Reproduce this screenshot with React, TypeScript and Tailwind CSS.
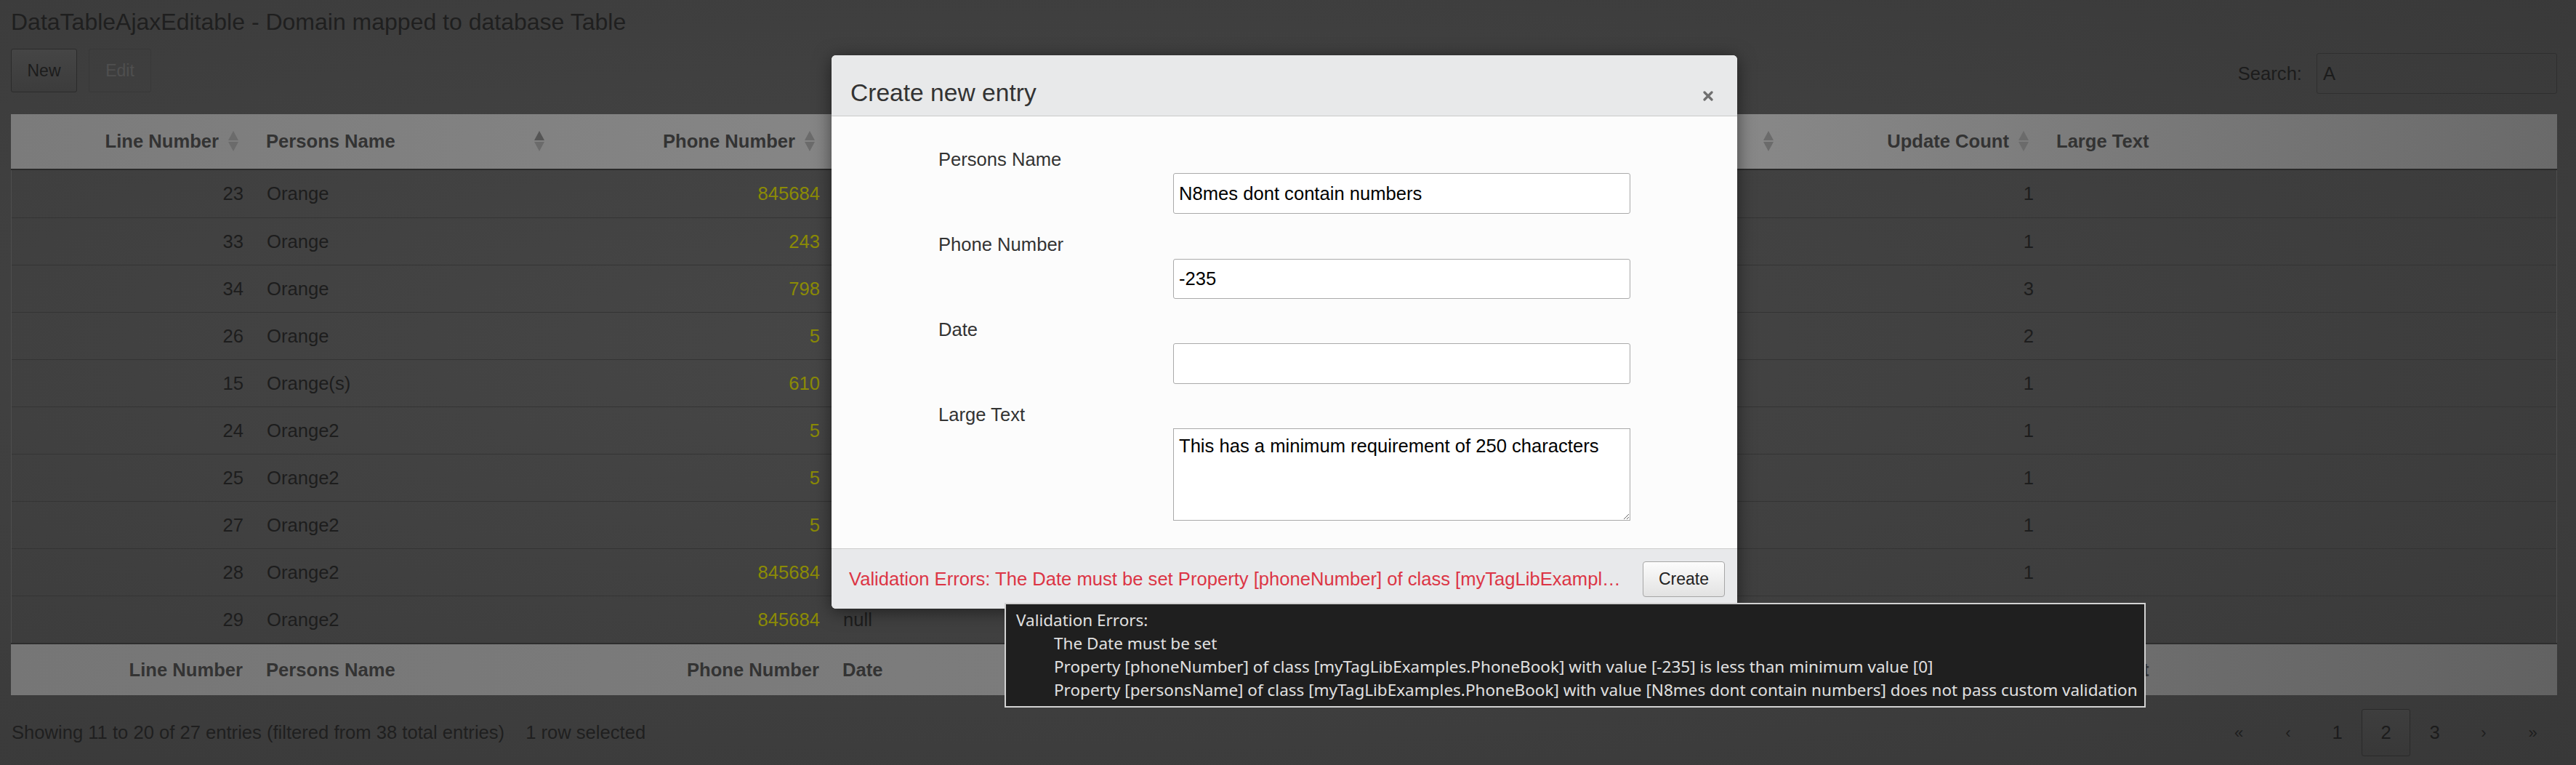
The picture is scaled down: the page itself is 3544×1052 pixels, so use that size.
import React from "react";

type Row = [string, string, string, string, string];

const rows: Row[] = [
  ["23", "Orange", "845684", "", "1"],
  ["33", "Orange", "243", "", "1"],
  ["34", "Orange", "798", "", "3"],
  ["26", "Orange", "5", "", "2"],
  ["15", "Orange(s)", "610", "", "1"],
  ["24", "Orange2", "5", "", "1"],
  ["25", "Orange2", "5", "", "1"],
  ["27", "Orange2", "5", "", "1"],
  ["28", "Orange2", "845684", "", "1"],
  ["29", "Orange2", "845684", "null", "1"],
];

function SortIcon({ active }: { active?: boolean }) {
  return (
    <svg width="14" height="28" viewBox="0 0 14 28" className="shrink-0">
      <polygon points="7,0 14,13 0,13" fill={active ? "#555555" : "#6b6b6b"} />
      <polygon points="0,15 14,15 7,28" fill="#6b6b6b" />
    </svg>
  );
}

const cols = "grid grid-cols-[335px_421px_372px_1319px_351px_705px]";

function HeadRight({ label }: { label: string }) {
  return (
    <div className="flex items-center justify-end gap-[13px] pr-[22px]">
      <span>{label}</span>
      <SortIcon />
    </div>
  );
}

function HeadLeft({ label, active }: { label: string; active?: boolean }) {
  return (
    <div className="flex items-center justify-between pl-[16px] pr-[22px]">
      <span>{label}</span>
      <SortIcon active={active} />
    </div>
  );
}

export default function App() {
  return (
    <div className="relative w-[3544px] h-[1052px] overflow-hidden bg-[radial-gradient(ellipse_at_40%_45%,#474747_0%,#3f3f3f_55%,#383838_100%)] font-['Liberation_Sans',Arial,sans-serif] text-[#1d1d1d]">
      {/* Page */}
      <div className="pl-[15px] pr-[26px]">
        <div className="pt-[13px] text-[32px] leading-[34px] text-[#1f1f1f]">
          DataTableAjaxEditable - Domain mapped to database Table
        </div>

        <div className="mt-[20px] flex items-start justify-between">
          <div className="flex gap-[16px]">
            <div className="h-[60px] w-[91px] flex items-center justify-center rounded-[3px] border border-[#2b2b2b] bg-[linear-gradient(#454545,#3c3c3c)] text-[23px] text-[#1c1c1c]">
              New
            </div>
            <div className="h-[60px] w-[86px] flex items-center justify-center rounded-[3px] border border-[#383838] text-[23px] text-[#4f4f4f]">
              Edit
            </div>
          </div>
          <div className="mt-[6px] flex items-center gap-[20px] text-[25.6px] text-[#1c1c1c]">
            <span>Search:</span>
            <div className="h-[56px] w-[331px] rounded-[3px] border border-[#2f2f2f] flex items-center pl-[8px]">
              A
            </div>
          </div>
        </div>

        {/* Table */}
        <div className="mt-[28px] w-[3503px]">
          <div
            className={`${cols} h-[77px] items-center border-b-2 border-[#2a2a2a] bg-[linear-gradient(to_right,#7b7b7b_0%,#858585_30%,#888888_68%,#6a6a6a_100%)] text-[25.6px] font-bold text-[#333333]`}
          >
            <HeadRight label="Line Number" />
            <HeadLeft label="Persons Name" active />
            <HeadRight label="Phone Number" />
            <HeadLeft label="Date" />
            <HeadRight label="Update Count" />
            <HeadLeft label="Large Text" />
          </div>
          <div className="border-x border-[#4e4e4e]">
            {rows.map((r, i) => (
              <div
                key={i}
                className={`${cols} h-[65px] items-center text-[25.6px] ${i > 0 ? "border-t border-[#343434]" : ""}`}
              >
                <div className="text-right pr-[16px]">{r[0]}</div>
                <div className="pl-[16px]">{r[1]}</div>
                <div className="text-right pr-[16px] text-[#8b8b05]">{r[2]}</div>
                <div className="pl-[16px]">{r[3]}</div>
                <div className="text-right pr-[16px]">{r[4]}</div>
                <div className="pl-[16px]"></div>
              </div>
            ))}
          </div>
          <div
            className={`${cols} h-[72px] items-center border-t-2 border-[#2e2e2e] bg-[linear-gradient(to_right,#767676_0%,#7c7c7c_35%,#7a7a7a_65%,#626262_100%)] text-[25.6px] font-bold text-[#333333]`}
          >
            <div className="text-right pr-[16px]">Line Number</div>
            <div className="pl-[16px]">Persons Name</div>
            <div className="text-right pr-[16px]">Phone Number</div>
            <div className="pl-[16px]">Date</div>
            <div className="text-right pr-[16px]">Update Count</div>
            <div className="pl-[16px]">Large Text</div>
          </div>

          <div className="mt-[19px] flex items-center justify-between">
            <div className="pl-[1px] text-[25.6px] text-[#1f1f1f]">
              Showing 11 to 20 of 27 entries (filtered from 38 total entries)
              <span className="ml-[29px]">1 row selected</span>
            </div>
            <div className="flex items-center text-[25.6px] text-[#1c1c1c]">
              <div className="w-[68px] h-[65px] flex items-center justify-center text-[22px] text-[#1e1e1e]">«</div>
              <div className="w-[68px] h-[65px] flex items-center justify-center text-[22px] text-[#1e1e1e]">‹</div>
              <div className="w-[67px] h-[65px] flex items-center justify-center">1</div>
              <div className="w-[67px] h-[65px] flex items-center justify-center rounded-[3px] border border-[#2a2a2a] bg-[linear-gradient(#3e3e3e,#383838)]">2</div>
              <div className="w-[67px] h-[65px] flex items-center justify-center">3</div>
              <div className="w-[68px] h-[65px] flex items-center justify-center text-[22px] text-[#1e1e1e]">›</div>
              <div className="w-[67px] h-[65px] flex items-center justify-center text-[22px] text-[#1e1e1e]">»</div>
            </div>
          </div>
        </div>
      </div>

      {/* Modal */}
      <div className="absolute left-[1144px] top-[76px] w-[1246px] h-[761px] rounded-[6px] overflow-hidden flex flex-col bg-[#fcfcfc] shadow-[0_4px_24px_rgba(0,0,0,0.5)]">
        <div className="h-[84px] shrink-0 border-b border-[#c9c9c9] bg-[#e8e9ea] flex items-start justify-between pl-[26px] pr-[33px]">
          <div className="mt-[34px] text-[33.6px] leading-[36px] text-[#333333]">Create new entry</div>
          <svg width="14" height="14" viewBox="0 0 14 14" className="mt-[49px]">
            <path d="M2 2 L12 12 M12 2 L2 12" stroke="#6f6f6f" strokeWidth="3.2" strokeLinecap="round" />
          </svg>
        </div>

        <div className="flex-1 pt-[45px] pl-[147px] flex flex-col gap-[28px] text-[25.6px]">
          <div className="flex flex-col">
            <div className="leading-[29px] text-[#333333]">Persons Name</div>
            <div className="mt-[4px] ml-[323px] h-[56px] w-[629px] rounded-[3px] border border-[#aaaaaa] bg-white flex items-center pl-[7px] text-black">
              N8mes dont contain numbers
            </div>
          </div>
          <div className="flex flex-col">
            <div className="leading-[29px] text-[#333333]">Phone Number</div>
            <div className="mt-[5px] ml-[323px] h-[55px] w-[629px] rounded-[3px] border border-[#aaaaaa] bg-white flex items-center pl-[7px] text-black">
              -235
            </div>
          </div>
          <div className="flex flex-col">
            <div className="leading-[29px] text-[#333333]">Date</div>
            <div className="mt-[4px] ml-[323px] h-[56px] w-[629px] rounded-[3px] border border-[#aaaaaa] bg-white"></div>
          </div>
          <div className="flex flex-col">
            <div className="leading-[29px] text-[#333333]">Large Text</div>
            <textarea
              readOnly
              defaultValue="This has a minimum requirement of 250 characters"
              className="mt-[4px] ml-[323px] h-[127px] w-[629px] border border-[#a9a9a9] bg-white pl-[7px] pt-[9px] text-[25.6px] leading-[29px] text-black outline-none font-['Liberation_Sans',Arial,sans-serif]"
            />
          </div>
        </div>

        <div className="h-[83px] shrink-0 border-t border-[#cccccc] bg-[#e8e9eb] flex items-center pl-[24px] pr-[17px]">
          <div className="flex-1 min-w-0 truncate mr-[24px] text-[25.6px] text-[#dc3545]">
            Validation Errors: The Date must be set Property [phoneNumber] of class [myTagLibExamples.PhoneBook] with value [-235] is less than minimum value [0] Property [personsName] of class [myTagLibExamples.PhoneBook] with value [N8mes dont contain numbers] does not pass custom validation
          </div>
          <div className="h-[49px] w-[113px] shrink-0 rounded-[4px] border border-[#a6a6a6] bg-[linear-gradient(#fcfcfc,#e2e2e2)] flex items-center justify-center text-[23px] text-[#222222]">
            Create
          </div>
        </div>
      </div>

      {/* Tooltip */}
      <div className="absolute left-[1382px] top-[829px] w-[1570px] h-[144px] border-2 border-[#d2d2d2] bg-[#1f1f1f] pl-[14px] pt-[6px] text-[22.5px] leading-[32px] text-[#e0e0e0] font-['Noto_Sans',sans-serif] whitespace-nowrap">
        <div>Validation Errors:</div>
        <div className="pl-[52px]">The Date must be set</div>
        <div className="pl-[52px]">Property [phoneNumber] of class [myTagLibExamples.PhoneBook] with value [-235] is less than minimum value [0]</div>
        <div className="pl-[52px]">Property [personsName] of class [myTagLibExamples.PhoneBook] with value [N8mes dont contain numbers] does not pass custom validation</div>
      </div>
    </div>
  );
}
